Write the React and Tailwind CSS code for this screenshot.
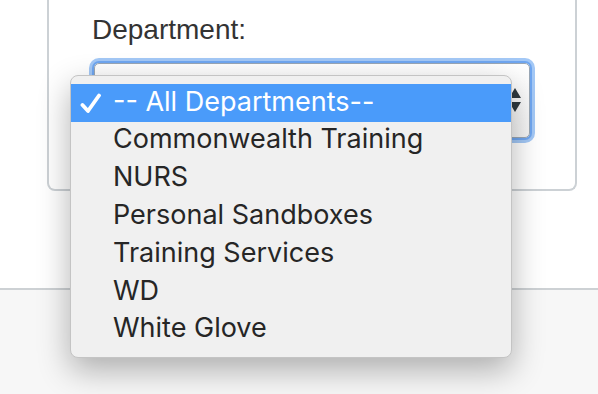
import React from "react";

const items = [
  "-- All Departments--",
  "Commonwealth Training",
  "NURS",
  "Personal Sandboxes",
  "Training Services",
  "WD",
  "White Glove",
];

export default function App() {
  return (
    <div className="relative w-[598px] h-[394px] overflow-hidden bg-white">
      <div className="h-[288px] bg-white">
        <div
          className="ml-[47px] w-[530px] h-[191px] border-2 border-t-0 border-[#ccd1d5] rounded-b-[8px] pt-[10px] pl-[43px]"
          style={{ fontFamily: '"Liberation Sans", Arial, sans-serif' }}
        >
          <div className="text-[28px] leading-[40px] text-[#333]">Department:</div>
          <div className="ml-[2px] mt-[13px] w-[436px] h-[75px] rounded-[5px] border border-[#9aa7b5] bg-gradient-to-b from-white to-[#f4f4f4] shadow-[0_0_0_2px_#6fa6f0,0_0_0_5px_#a3c8f6] flex items-center justify-end pr-[8px]">
            <svg width="12" height="26" viewBox="0 0 12 26">
              <path d="M6 0 L12 10 L0 10 Z" fill="#2f3a40" />
              <path d="M0 14 L12 14 L6 24 Z" fill="#2f3a40" />
            </svg>
          </div>
        </div>
      </div>
      <div className="h-[106px] bg-[#f7f7f7] border-t-2 border-[#cdd1d4]" />

      <div
        className="absolute left-[70px] top-[75px] w-[442px] h-[283px] bg-[#f0f0f0] rounded-[8px] border border-[#c4c4c4] shadow-[0_12px_32px_rgba(0,0,0,0.3)] pt-[8px]"
        style={{ fontFamily: 'Inter, "Noto Sans", sans-serif' }}
      >
        {items.map((t, i) => (
          <div
            key={t}
            className={
              "relative h-[37.8px] flex items-center pl-[42px] text-[27px] " +
              (i === 0 ? "bg-[#4a9bfa] text-white" : "text-[#262626]")
            }
          >
            {i === 0 && (
              <svg className="absolute left-[9px] top-[9px]" width="22" height="21" viewBox="0 0 22 21">
                <path d="M2.5 12 L8 18 L19 2.5" fill="none" stroke="white" strokeWidth="3.8" strokeLinecap="round" strokeLinejoin="round" />
              </svg>
            )}
            <span className="pb-[2px]">{t}</span>
          </div>
        ))}
      </div>
    </div>
  );
}
